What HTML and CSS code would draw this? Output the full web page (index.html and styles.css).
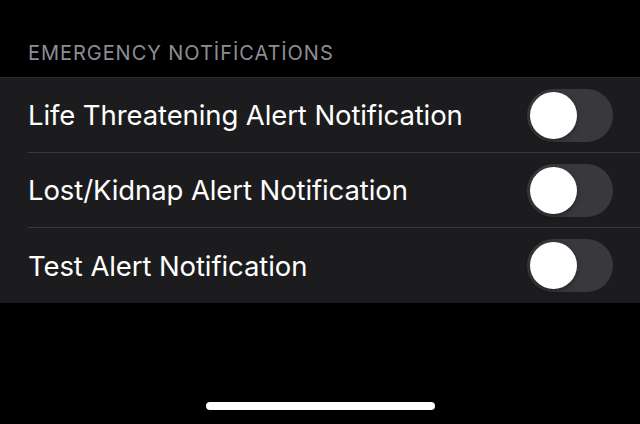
FILE: index.html
```html
<!DOCTYPE html>
<html>
<head>
<meta charset="utf-8">
<link rel="stylesheet" href="styles.css">
</head>
<body>
<div class="screen">
  <div class="section-header">EMERGENCY NOTİFİCATİONS</div>
  <div class="group">
    <div class="row">
      <span class="label">Life Threatening Alert Notification</span>
      <span class="toggle"><span class="knob"></span></span>
    </div>
    <div class="row">
      <span class="label">Lost/Kidnap Alert Notification</span>
      <span class="toggle"><span class="knob"></span></span>
    </div>
    <div class="row">
      <span class="label">Test Alert Notification</span>
      <span class="toggle"><span class="knob"></span></span>
    </div>
  </div>
  <div class="spacer"></div>
  <div class="home-bar"></div>
</div>
</body>
</html>
```
FILE: styles.css
```css
html, body {
  margin: 0;
  padding: 0;
  background: #000;
}
.screen {
  width: 640px;
  height: 424px;
  display: flex;
  flex-direction: column;
  font-family: Inter, "Liberation Sans", sans-serif;
  overflow: hidden;
}
.section-header {
  color: #8d8d93;
  font-size: 20px;
  padding: 42px 0 0 28px;
  height: 77px;
  box-sizing: border-box;
  line-height: 22px;
  letter-spacing: 0.95px;
}
.group {
  background: #1c1c1e;
  border-top: 1px solid #2c2c2e;
}
.row {
  height: 75px;
  margin-left: 28px;
  padding-right: 27px;
  display: flex;
  align-items: center;
  justify-content: space-between;
  border-bottom: 1px solid #38383a;
  box-sizing: border-box;
}
.row:last-child {
  border-bottom: none;
}
.label {
  color: #fff;
  font-size: 27.5px;
  letter-spacing: -0.1px;
}
.toggle {
  width: 86px;
  height: 53px;
  border-radius: 27px;
  background: #39393d;
  display: flex;
  align-items: center;
  padding-left: 3px;
  box-sizing: border-box;
}
.knob {
  width: 47px;
  height: 47px;
  border-radius: 50%;
  background: #fff;
  box-shadow: 0 2px 5px rgba(0,0,0,0.35);
}
.spacer {
  flex: 1;
}
.home-bar {
  align-self: center;
  width: 229px;
  height: 8px;
  border-radius: 4px;
  background: #fff;
  margin-bottom: 14px;
  margin-left: 1px;
}
```
